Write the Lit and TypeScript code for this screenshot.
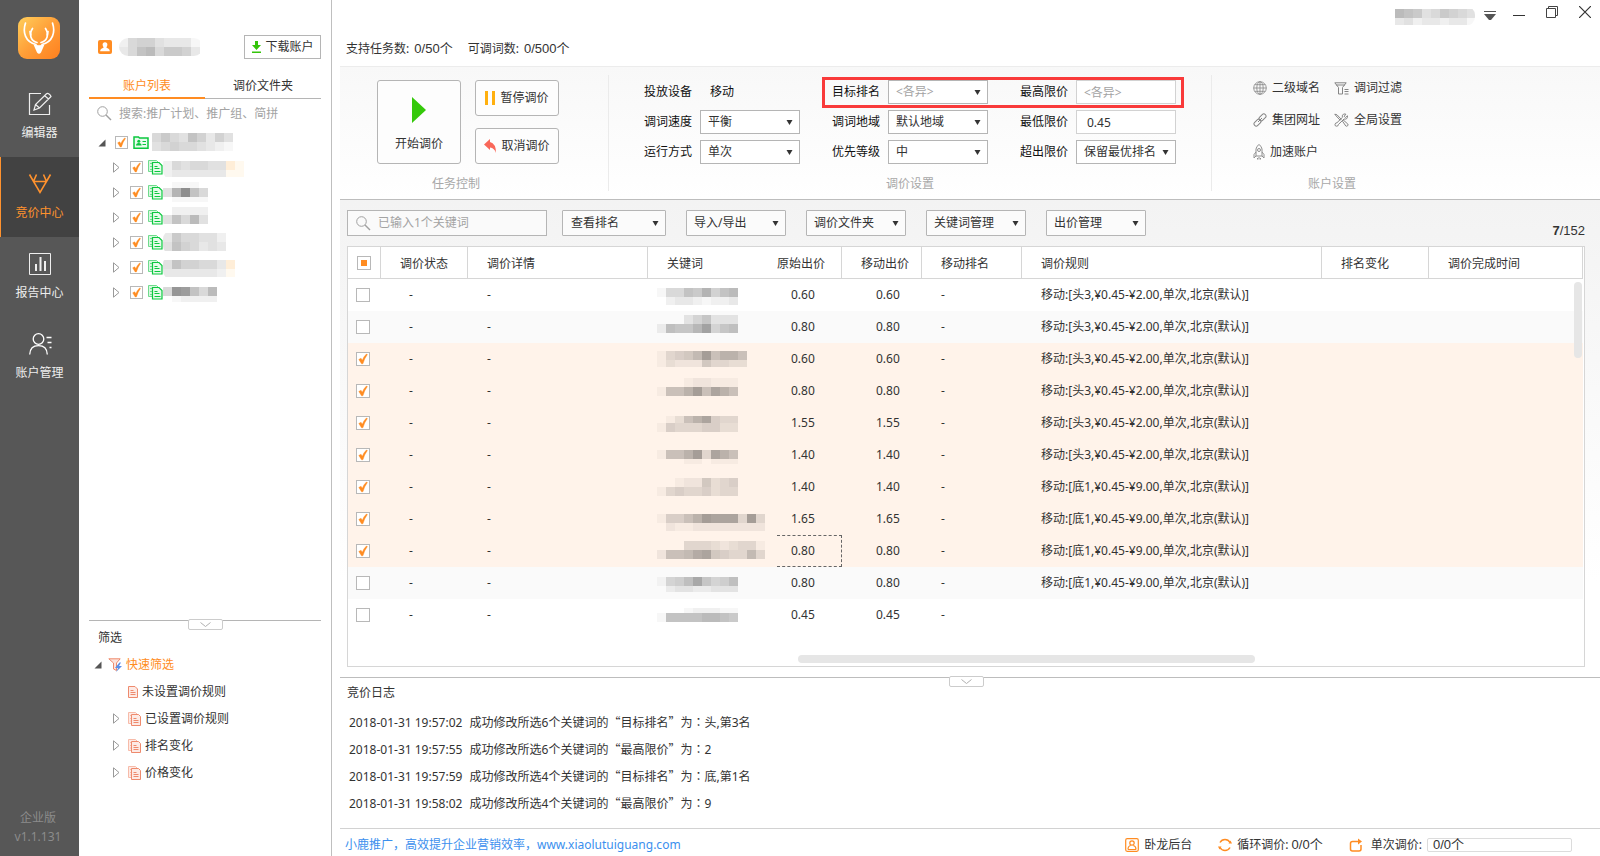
import { LitElement, html, svg, css, nothing } from "lit";
import { customElement } from "lit/decorators.js";

type Strip = [x: number, y: number, h: number, levels: string];

interface KeywordRow {
  checked: boolean;
  price: string;
  rule: string;
  mask: Strip[];
  focus?: boolean;
}

const TOP3 = "移动:[头3,¥0.45-¥2.00,单次,北京(默认)]";
const LOW1 = "移动:[底1,¥0.45-¥9.00,单次,北京(默认)]";

const ROWS: KeywordRow[] = [
  { checked: false, price: "0.60", rule: TOP3, mask: [[0, 9, 9, "15587a689"], [0, 18, 8, "023321223"]] },
  { checked: false, price: "0.80", rule: TOP3, mask: [[27, 4, 9, "357333"], [0, 13, 9, "28779c578"]] },
  { checked: true, price: "0.60", rule: TOP3, mask: [[0, 8, 9, "14568c7997"], [0, 17, 7, "1322264433"]] },
  { checked: true, price: "0.80", rule: TOP3, mask: [[27, 3, 9, "122111"], [0, 12, 9, "1779c7b97"]] },
  { checked: true, price: "1.55", rule: TOP3, mask: [[9, 9, 7, "1379b544"], [0, 16, 9, "154445533"]] },
  { checked: true, price: "1.40", rule: TOP3, mask: [[0, 11, 9, "1779c4b97"], [27, 20, 5, "110111"]] },
  { checked: true, price: "1.40", rule: LOW1, mask: [[18, 7, 9, "1226345"], [0, 16, 9, "145445344"]] },
  { checked: true, price: "1.65", rule: LOW1, mask: [[0, 11, 9, "15579cbbb4c4"], [9, 20, 8, "21122222222"]] },
  { checked: true, price: "0.80", rule: LOW1, mask: [[27, 6, 9, "444323441"], [0, 15, 9, "2778ab654484"]], focus: true },
  { checked: false, price: "0.80", rule: LOW1, mask: [[0, 10, 9, "1568b7568"], [9, 19, 6, "23322333"]] },
  { checked: false, price: "0.45", rule: "", mask: [[27, 9, 5, "122211"], [0, 14, 9, "188889987"]] },
];

const TREE: Strip[][] = [
  [[0, 6, 9, "2545544qp"], [0, 15, 7, "2333333pp"]],
  [[0, 2, 6, "01110"], [0, 8, 9, "4af85"], [9, 17, 5, "1111"]],
  [[9, 2, 8, "2222"], [0, 10, 9, "48594"]],
  [[0, 3, 9, "3755442"], [0, 12, 9, "4865343"]],
  [[0, 5, 9, "4866553q"], [0, 14, 8, "3333332p"]],
  [[0, 7, 9, "5ed859"], [9, 16, 6, "12222"]],
];

const LOG = [
  { time: "2018-01-31 19:57:02", count: 6, field: "目标排名", value: "头,第3名" },
  { time: "2018-01-31 19:57:55", count: 6, field: "最高限价", value: "2" },
  { time: "2018-01-31 19:57:59", count: 4, field: "目标排名", value: "底,第1名" },
  { time: "2018-01-31 19:58:02", count: 4, field: "最高限价", value: "9" },
];

/** Pixelated cover drawn over a private name: hex digits are grey levels, p and q are cream tints. */
const mosaic = (strips: Strip[], w: number, h: number) => html`
  <svg class="mosaic" width=${w} height=${h} viewBox="0 0 ${w} ${h}" shape-rendering="crispEdges" aria-hidden="true">
    ${strips.map(([x, y, sh, levels]) =>
      [...levels].map((c, i) => {
        const cream = c === "p" ? "#fff9ef" : c === "q" ? "#ffeed8" : "";
        return svg`<rect x=${x + i * 9} y=${y} width="9" height=${sh} fill=${cream || "#000"}
          fill-opacity=${cream ? 1 : parseInt(c, 16) / 34} />`;
      }))}
  </svg>`;

const caret = html`<svg class="caret" width="7" height="5" viewBox="0 0 7 5" aria-hidden="true"><path d="M.5 0h6L3.500 5z" fill="#333"/></svg>`;
const lens = html`<svg width="15" height="15" viewBox="0 0 15 15" fill="none" stroke="#a0a0a0" aria-hidden="true"><circle cx="5.500" cy="5.500" r="4.800"/><path d="M9 9l5 5" stroke-width="1.400"/></svg>`;
const openTri = html`<svg class="tri" width="8" height="8" viewBox="0 0 8 8" aria-hidden="true"><path d="M7.500.5v7h-7z" fill="#555"/></svg>`;
const closedTri = html`<svg class="tri" width="7" height="11" viewBox="0 0 7 11" aria-hidden="true"><path d="M.5.800v9.400l5.500-4.700z" fill="#fff" stroke="#999"/></svg>`;
const chevron = html`<svg width="11" height="5" viewBox="0 0 11 5" fill="none" stroke="#b0b0b0" aria-hidden="true"><path d="M.5.5l5 4 5-4"/></svg>`;
const greenPages = html`<svg width="15" height="15" viewBox="0 0 15 15" fill="none" aria-hidden="true">
  <path d="M.5.5h8l2 2v9h-10z" fill="#d9f7e0" stroke="#6fdb8d"/><path d="M2 3.500h2M2 6.500h2M2 9.500h2" stroke="#6fdb8d"/>
  <path d="M4.500 2.500h6.500l3 3v8.500h-9.500z" fill="#e6fbea" stroke="#0bc83f" stroke-width="1.200"/><path d="M6.500 6.500h3M6.500 8.500h5M6.500 11.500h6" stroke="#0bc83f"/></svg>`;
const redPages = html`<svg width="14" height="14" viewBox="0 0 14 14" fill="none" aria-hidden="true">
  <path d="M.5.5h7l2 2v9h-9z" fill="#fdeae5" stroke="#f7bba9"/><path d="M2 3.500h2M2 6.500h2M2 9h2" stroke="#f7bba9"/>
  <path d="M3.500 2.500h7l2 2v9h-9z" fill="#fdeae5" stroke="#ee8a6d"/><path d="M5.500 6.500h3M5.500 8.500h5M5.500 10.500h5" stroke="#ee8a6d"/></svg>`;
const redPage = html`<svg width="10" height="12" viewBox="0 0 10 12" fill="none" aria-hidden="true">
  <path d="M.5.5h6.500l2.500 2.500v8.500h-9z" fill="#fdeae5" stroke="#ee8a6d"/><path d="M2.500 4.500h3M2.500 6.500h5M2.500 8.500h5" stroke="#ee8a6d"/></svg>`;

@customElement("app-root")
export class AppRoot extends LitElement {
  static styles = css`
    :host {
      display: flex;
      height: 100vh;
      min-height: 720px;
      overflow: hidden;
      background: #fff;
      color: #333;
      font: 12px/16px "Noto Sans", "Noto Sans CJK SC", sans-serif;
    }
    * { box-sizing: border-box; }
    svg { display: block; flex: none; }
    button, select, input { font: inherit; color: inherit; margin: 0; }
    button { background: none; border: 0; padding: 0; cursor: pointer; white-space: nowrap; }
    a { color: inherit; text-decoration: none; }
    ul { list-style: none; margin: 0; padding: 0; }

    .rail { width: 79px; flex: none; display: flex; flex-direction: column; background: #575757; color: #eee; padding-bottom: 10px; }
    .logo { margin: 17px 0 18px 18px; }
    .rail-item { height: 80px; display: flex; flex-direction: column; align-items: center; gap: 9px; padding-top: 15px; width: 100%; }
    .rail-item.on { background: #424242; color: #ff922e; box-shadow: inset 1px 0 #ff922e; }
    .edition { margin-top: auto; text-align: center; color: #8c8c8c; line-height: 19px; padding-right: 3px; }

    .side { width: 253px; flex: none; display: flex; flex-direction: column; border-right: 1px solid #bfbfbf; padding: 35px 10px 0; }
    .user { display: flex; align-items: center; padding-left: 9px; gap: 7px; height: 24px; }
    .user .mosaic { border-radius: 9px; }
    .download { margin-left: auto; width: 77px; height: 24px; border: 1px solid #b5b5b5; display: flex; align-items: center; justify-content: center; gap: 3px; }
    .tabs { display: grid; grid-template-columns: 1fr 1fr; margin-top: 14px; }
    .tabs button { height: 26px; border-bottom: 1px solid #b5b5b5; padding-top: 1px; }
    .tabs .on { color: #ff8c22; border-bottom: 2px solid #ff8c22; padding-top: 2px; }
    .find { display: flex; align-items: center; gap: 7px; padding-left: 8px; height: 29px; }
    .find input, .kw-find input { border: 0; outline: 0; background: none; padding: 0; flex: 1; min-width: 0; }
    input::placeholder { color: #a3a3a3; opacity: 1; }
    .tree { padding: 2px 0 0 9px; }
    .node { display: flex; align-items: center; height: 25px; }
    .node.child { padding-left: 15px; }
    .node .tri { margin-right: 9px; }
    .node.child .tri { margin-right: 10px; }
    .node .check { margin-right: 5px; }
    .node .mosaic { border-radius: 9px 0 0 9px; }
    .check { appearance: none; width: 14px; height: 14px; flex: none; border: 1px solid #b8b8b8; background: #fff; }
    .check.small { width: 13px; height: 13px; }
    .check:checked { background: #fff url("data:image/svg+xml,%3Csvg xmlns='http://www.w3.org/2000/svg' viewBox='0 0 12 12'%3E%3Cpath d='M1.800 6.400 4 5.200 5.300 7.200Q6.500 3.800 9.400 1L10.400 1.500Q7.400 5.500 5.900 10.800H4.500z' fill='%23ff8c22' stroke='%23ff8c22' stroke-width='.4'/%3E%3C/svg%3E") center / 100% 100% no-repeat; }
    .check:indeterminate { background: linear-gradient(#ff8c22, #ff8c22) center / 6px 6px no-repeat #fff; }
    .filters { margin-top: auto; border-top: 1px solid #b5b5b5; height: 236px; display: flex; flex-direction: column; }
    .handle { align-self: center; height: 11px; width: 35px; flex: none; margin-top: -2px; border: 1px solid #ccc; border-radius: 2px; background: #fff; display: flex; align-items: center; justify-content: center; }
    .filter-title { padding-left: 9px; height: 21px; line-height: 16px; }
    .filters li { display: flex; align-items: center; height: 27px; gap: 3px; padding-left: 24px; }
    .filters li.root { padding-left: 5px; color: #ff8c22; }
    .filters li.leaf { padding-left: 39px; gap: 4px; }
    .filters li.root .tri { margin-right: 3px; }
    .filters li .tri { margin-right: 5px; }

    .main { flex: 1; min-width: 0; display: flex; flex-direction: column; padding-left: 8px; }
    .titlebar { height: 66px; display: flex; justify-content: space-between; padding: 6px 9px 0 6px; }
    .quota { display: flex; gap: 15px; padding-top: 35px; height: 52px; }
    .quota .num, .total, .footer .num { font-family: "Liberation Sans", "Noto Sans CJK SC", sans-serif; font-size: 13px; }
    .quota .num { margin-left: 2px; }
    .win { display: flex; align-items: flex-start; }
    .win .mosaic { margin-right: 9px; border-radius: 9px; }
    .win button { margin-right: 17px; }
    .win button + button { margin-right: 21px; }
    .win button:last-child { margin-right: 0; }

    .ribbon { height: 134px; flex: none; display: flex; border-top: 1px solid #ececec; border-bottom: 1px solid #bdbdbd; background: linear-gradient(#f8f8f8, #fff); padding: 8px 0; }
    .group { display: flex; flex-direction: column; border-right: 1px solid #ebebeb; }
    .group:last-child { border: 0; }
    .group-name { color: #a8a8a8; text-align: center; margin-top: auto; line-height: 14px; }
    .tasks { width: 269px; padding: 5px 49px 0 37px; }
    .task-grid { display: grid; grid-template-columns: 84px 84px; grid-template-rows: 36px 36px; gap: 12px 14px; }
    .tasks .group-name { padding-right: 24px; width: 182px; }
    .task { border: 1px solid #b5b5b5; border-radius: 3px; background: #fdfdfd; display: flex; align-items: center; justify-content: center; gap: 5px; }
    .task.big { grid-row: span 2; flex-direction: column; gap: 13px; padding-top: 4px; }
    .settings { width: 603px; padding: 5px 0 0 35px; color: #111; }
    .set-grid { position: relative; display: grid; grid-template-columns: repeat(3, 156px); grid-auto-rows: 24px; gap: 6px 32px; }
    .field { display: grid; grid-template-columns: 56px 100px; align-items: center; }
    .field .text { padding-left: 10px; }
    .field input { height: 24px; width: 100%; border: 1px solid #d2d2d2; background: #fff; padding: 0 7px; color: #333; border-radius: 0; }
    .field .value { padding: 0 10px; }
    .pick { display: grid; align-items: center; }
    .pick select { grid-area: 1 / 1; appearance: none; height: 24px; width: 100%; border: 1px solid #b5b5b5; border-radius: 0; background: #fff; padding: 0 7px; color: #333; }
    .pick .mixed { color: #a3a3a3; }
    .pick .caret { grid-area: 1 / 1; justify-self: end; margin-right: 7px; pointer-events: none; }
    .callout { position: absolute; left: 178px; top: -3px; width: 362px; height: 31px; border: 3px solid #f93a3a; pointer-events: none; }
    .settings .group-name { width: 532px; }
    .account { padding: 5px 0 0 41px; }
    .links { display: grid; grid-template-columns: 81px 81px; grid-auto-rows: 16px; gap: 16px 0; }
    .links a { display: flex; align-items: center; gap: 5px; white-space: nowrap; }
    .account .group-name { width: 158px; }

    .work { flex: 1; min-height: 0; display: flex; flex-direction: column; background: linear-gradient(#f3f3f3, #fff 80%); padding: 10px 15px 10px 7px; }
    .tools { display: flex; gap: 20px; }
    .kw-find { width: 200px; height: 26px; border: 1px solid #b5b5b5; background: #fafafa; display: flex; align-items: center; gap: 7px; padding: 0 8px; margin-right: -5px; }
    .menu { width: 100px; height: 26px; border: 1px solid #b5b5b5; border-radius: 1px; background: #fbfbfb; display: flex; align-items: center; justify-content: space-between; padding: 0 6px 0 7px; }
    .menu.wide { width: 104px; padding-left: 8px; }
    .total { margin-left: auto; align-self: flex-end; line-height: 16px; margin-bottom: -3px; }
    .sheet { position: relative; flex: 1; min-height: 0; margin-top: 10px; border: 1px solid #d6d6d6; background: #fff; padding-right: 1px; overflow: hidden; }
    table { width: 100%; border-collapse: separate; border-spacing: 0; table-layout: fixed; }
    th { height: 32px; font-weight: normal; text-align: left; border-right: 1px solid #d6d6d6; border-bottom: 1px solid #d6d6d6; padding: 2px 0 0 19px; white-space: nowrap; }
    th:first-child { padding: 0 0 0 9px; }
    th.kw { border-right: 0; }
    th.orig { padding-left: 0; }
    th .check, td .check { display: block; }
    td { height: 32px; padding: 0 0 0 19px; white-space: nowrap; }
    td:first-child { padding-left: 8px; }
    td.status { padding-left: 28px; }
    td.kw { padding-left: 9px; }
    td.orig { padding-left: 14px; }
    td.mob { padding-left: 34px; }
    tr:nth-child(even) td { background: #fafafa; }
    tr.sel td { background: #fff3ea; }
    td.focus { border: 1px dashed #666; border-left: 0; }
    .c-check { width: 33px; } .c-status { width: 87px; } .c-detail { width: 180px; } .c-kw { width: 129px; }
    .c-orig { width: 65px; } .c-mob { width: 80px; } .c-rank { width: 100px; } .c-rule { width: 300px; } .c-change { width: 107px; }
    .vbar { position: absolute; right: 2px; top: 35px; width: 8px; height: 76px; border-radius: 4px; background: #e6e6e6; }
    .hbar { position: absolute; left: 36.4%; width: 37%; bottom: 3px; height: 8px; border-radius: 4px; background: #e6e6e6; }

    .log { height: 151px; flex: none; border-top: 1px solid #bdbdbd; display: flex; flex-direction: column; }
    .log .handle { margin-right: 8px; }
    .log-title { padding-left: 7px; margin-top: -2px; line-height: 16px; }
    .log ul { padding: 8px 0 0 9px; }
    .log li { height: 27px; line-height: 27px; white-space: nowrap; }
    .log time { margin-right: 4px; }
    .cjk { font-family: "Noto Sans CJK SC", sans-serif; line-height: 16px; }
    .mid { font-family: "Noto Sans CJK TC", sans-serif; line-height: 16px; }
    .footer { height: 28px; flex: none; border-top: 1px solid #d2d2d2; display: flex; align-items: center; padding: 4px 28px 0 5px; white-space: nowrap; }
    .footer .site { color: #3b8fee; margin-right: auto; }
    .stat { display: flex; align-items: center; gap: 5px; margin-left: 26px; }
    .bar { width: 145px; height: 14px; line-height: 14px; border: 1px solid #dcdcdc; border-radius: 2px; padding-left: 5px; display: flex; align-items: center; }
  `;

  private pick(label: string, value: string, mixed = false) {
    return html`<label class="field"><span>${label}</span><span class="pick">
      <select class=${mixed ? "mixed" : ""}><option>${value}</option></select>${caret}</span></label>`;
  }

  private rail() {
    return html`<nav class="rail">
      <svg class="logo" width="42" height="42" viewBox="0 0 42 42" aria-hidden="true">
        <defs><linearGradient id="lg" x1="0" y1="0" x2="1" y2="1"><stop offset="0" stop-color="#ffcf5c"/><stop offset=".5" stop-color="#ff9f38"/><stop offset="1" stop-color="#ff7f1e"/></linearGradient></defs>
        <rect width="42" height="42" rx="9" fill="url(#lg)"/>
        <g fill="none" stroke="#fff" stroke-width="1.700" stroke-linecap="round">
          <path d="M7.500 6C4.500 15 7 25 18 27.500M34.500 6C37.500 15 35 25 24 27.500"/>
          <path d="M14.500 11.500c-4 6 -1.500 12.500 4.500 14M27.500 11.500c4 6 1.500 12.500-4.500 14"/><path d="M12 14.500l.8 3.500M30 14.500l-.8 3.500"/></g>
        <path d="M15.500 27.500q5.500 1.500 11 0l-3.500 8q-2 2.500-4 0z" fill="#fff"/>
      </svg>
      <button class="rail-item"><svg width="24" height="24" viewBox="0 0 24 24" fill="none" stroke="#eee" stroke-width="1.200" aria-hidden="true"><path d="M13 1.500H1.500v21h20V13"/><path d="M6 18l1.500-5.500L18.500 1.800q1-.8 2.500.2t2 2.500L11.500 16z M7.500 12.500l4 3.500M17 4l3.500 3"/></svg><span>编辑器</span></button>
      <button class="rail-item on"><svg width="24" height="24" viewBox="0 0 24 24" fill="none" stroke="#ff922e" stroke-width="1.600" aria-hidden="true"><path d="M1.500 2.500l4 7h13l4-7M8.500 2.500l-3 7 6.500 11 6.500-11-3-7"/></svg><span>竞价中心</span></button>
      <button class="rail-item"><svg width="24" height="24" viewBox="0 0 24 24" fill="none" stroke="#eee" aria-hidden="true"><path d="M1.500 1.500h21v21h-21z"/><path d="M8 12v7M12.500 5v14M17 9v10" stroke-width="2"/></svg><span>报告中心</span></button>
      <button class="rail-item"><svg width="24" height="24" viewBox="0 0 24 24" fill="none" stroke="#fff" stroke-width="1.300" aria-hidden="true"><circle cx="10.500" cy="7" r="5.300"/><path d="M1.700 22.500C2 16 6 13.700 10.500 13.700S19 16 19.300 22.500M18.500 5.500h5M19.500 10.500h4M21.500 15.500h2"/></svg><span>账户管理</span></button>
      <div class="edition">企业版<br />v1.1.131</div>
    </nav>`;
  }

  private side() {
    return html`<aside class="side">
      <div class="user">
        <svg width="14" height="14" viewBox="0 0 14 14" aria-hidden="true"><rect width="14" height="14" rx="2" fill="#ff8c22"/><path d="M7 2.200c1.800 0 2.700 1.300 2.300 3.100-.2 1-.6 1.500-.9 2 .3 1.200 3.400 1 3.400 4H2.200c0-3 3.100-2.800 3.400-4-.3-.5-.7-1-.9-2C4.300 3.500 5.200 2.200 7 2.200z" fill="#fff"/></svg>
        ${mosaic([[0, 0, 9, "256643331"], [0, 9, 9, "358957763"]], 84, 18)}
        <button class="download"><svg width="11" height="12" viewBox="0 0 11 12" aria-hidden="true"><path d="M4 0h3v4h3L5.500 9 1 4h3zM1 10.500h9V12H1z" fill="#34c40a"/></svg>下载账户</button>
      </div>
      <div class="tabs"><button class="on">账户列表</button><button>调价文件夹</button></div>
      <label class="find">${lens}<input aria-label="搜索" placeholder="搜索:推广计划、推广组、简拼" /></label>
      <div class="tree">
        <div class="node">${openTri}<input type="checkbox" class="check small" aria-label="账户" checked />
          <svg width="16" height="13" viewBox="0 0 16 13" fill="none" stroke="#0bc83f" aria-hidden="true"><path d="M1 1h4.500l1 1H15v10.300H1z" fill="#e9fbee" stroke-width="1.500"/><path d="M9.500 5.500h3.500M9.500 8.500h3.500"/><circle cx="5.800" cy="5.300" r="1.500" fill="#0bc83f" stroke="none"/><path d="M3 9.500q0-2.500 2.800-2.500t2.800 2.500z" fill="#0bc83f" stroke="none"/></svg>
          ${mosaic([[3, 2, 9, "575486364"], [3, 11, 9, "456554321"]], 84, 24)}</div>
        ${TREE.map((m) => html`<div class="node child">${closedTri}<input type="checkbox" class="check small" aria-label="推广计划" checked />${greenPages}${mosaic(m, 84, 25)}</div>`)}
      </div>
      <div class="filters">
        <button class="handle" aria-label="收起">${chevron}</button>
        <div class="filter-title">筛选</div>
        <ul>
          <li class="root">${openTri}<svg width="15" height="14" viewBox="0 0 15 14" fill="none" aria-hidden="true"><path d="M.8.800h11.400L8.500 5v7.500l-3-1.500V5z" fill="#fde3dc" stroke="#ee8a6d"/><path d="M11.500 4.500L7 10h3l-2 4 6-6h-3l2-3.500z" fill="#5b8fe8"/></svg>快速筛选</li>
          <li class="leaf">${redPage}未设置调价规则</li>
          ${["已设置调价规则", "排名变化", "价格变化"].map((t) => html`<li>${closedTri}${redPages}${t}</li>`)}
        </ul>
      </div>
    </aside>`;
  }

  private ribbon() {
    return html`<div class="ribbon">
      <section class="group tasks">
        <div class="task-grid">
          <button class="task big"><svg width="14" height="26" viewBox="0 0 14 26" aria-hidden="true"><path d="M0 0l14 13L0 26z" fill="#34c90a"/></svg>开始调价</button>
          <button class="task"><svg width="10" height="14" viewBox="0 0 10 14" aria-hidden="true"><path d="M0 0h3v14H0zM7 0h3v14H7z" fill="#ffb00f"/></svg>暂停调价</button>
          <button class="task"><svg width="12" height="14" viewBox="0 0 12 14" aria-hidden="true"><path d="M0 5.500L6 0v3q6 1.500 6 11-1.500-5-6-5.500v2.500z" fill="#f9685a"/></svg>取消调价</button>
        </div>
        <div class="group-name">任务控制</div>
      </section>
      <section class="group settings">
        <div class="set-grid">
          <div class="field"><span>投放设备</span><span class="text">移动</span></div>
          ${this.pick("目标排名", "<各异>", true)}
          <label class="field"><span>最高限价</span><input placeholder="<各异>" /></label>
          ${this.pick("调词速度", "平衡")}
          ${this.pick("调词地域", "默认地域")}
          <label class="field"><span>最低限价</span><input class="value" .value=${"0.45"} /></label>
          ${this.pick("运行方式", "单次")}
          ${this.pick("优先等级", "中")}
          ${this.pick("超出限价", "保留最优排名")}
          <div class="callout"></div>
        </div>
        <div class="group-name">调价设置</div>
      </section>
      <section class="group account">
        <div class="links">
          <a href="#"><svg width="14" height="14" viewBox="0 0 14 14" fill="none" stroke="#909090" stroke-width=".9" aria-hidden="true"><circle cx="7" cy="7" r="6.300"/><ellipse cx="7" cy="7" rx="3.200" ry="6.300"/><path d="M7 .7v12.600M.7 7h12.600M1.700 3.700h10.600M1.700 10.300h10.600"/></svg>二级域名</a>
          <a href="#"><svg width="15" height="13" viewBox="0 0 15 13" fill="none" stroke="#858585" aria-hidden="true"><path d="M.8.800h11.400L8.500 5.500v6.500h-4V5.500zM2 3h9M10.500 7.500h4M10.500 9.500h4M10.500 12h4"/></svg>调词过滤</a>
          <a href="#"><svg width="14" height="14" viewBox="0 0 14 14" fill="none" stroke="#858585" aria-hidden="true"><rect x="5.500" y="2.200" width="8" height="4.400" rx="2.200" transform="rotate(-45 9.500 4.400)"/><rect x=".5" y="7.400" width="8" height="4.400" rx="2.200" transform="rotate(-45 4.500 9.600)"/><path d="M5 9l4-4"/></svg>集团网址</a>
          <a href="#"><svg width="15" height="14" viewBox="0 0 15 14" fill="none" stroke="#858585" stroke-linejoin="round" aria-hidden="true"><path d="M.8 1.200l2.200.6 4.200 4.400-1 1L2 2.800zM8.500 8.200l1-1L13.800 11q.7 1-.2 1.800t-1.800.2z"/><path d="M13.500 2.800l-2 1.700-1.300-1.200 1.700-2.100Q9.300.2 8.500 2.200q-.4 1 .1 2L3 9.700q-1.700 0-2 1.700t1.500 1.800 1.900-1.700L10 6q3.800.8 3.500-3.200z"/></svg>全局设置</a>
          <a href="#"><svg width="12" height="16" viewBox="0 0 12 16" fill="none" stroke="#909090" aria-hidden="true"><path d="M3 12V5q.5-3 3-4.500Q8.500 2 9 5v7zM3 8L1 10.500V14l2-2M9 8l2 2.500V14l-2-2M4.500 14v1.500M6 13v2.500M7.500 14v1.500"/><circle cx="6" cy="6" r="1.500"/></svg>加速账户</a>
        </div>
        <div class="group-name">账户设置</div>
      </section>
    </div>`;
  }

  private table() {
    return html`<div class="sheet">
      <table>
        <colgroup><col class="c-check" /><col class="c-status" /><col class="c-detail" /><col class="c-kw" /><col class="c-orig" /><col class="c-mob" /><col class="c-rank" /><col class="c-rule" /><col class="c-change" /><col /></colgroup>
        <thead><tr>
          <th><input type="checkbox" class="check" aria-label="全选" .indeterminate=${true} /></th>
          <th>调价状态</th><th>调价详情</th><th class="kw">关键词</th><th class="orig">原始出价</th><th>移动出价</th><th>移动排名</th><th>调价规则</th><th>排名变化</th><th>调价完成时间</th>
        </tr></thead>
        <tbody>${ROWS.map((r) => html`<tr class=${r.checked ? "sel" : ""}>
          <td><input type="checkbox" class="check" aria-label="选择关键词" .checked=${r.checked} /></td>
          <td class="status">-</td><td>-</td>
          <td class="kw">${mosaic(r.mask, 110, 32)}</td>
          <td class="orig ${r.focus ? "focus" : ""}">${r.price}</td>
          <td class="mob">${r.price}</td><td>-</td>
          <td>${r.rule || nothing}</td><td></td><td></td>
        </tr>`)}</tbody>
      </table>
      <div class="vbar"></div><div class="hbar"></div>
    </div>`;
  }

  render() {
    return html`${this.rail()}${this.side()}
      <main class="main">
        <header class="titlebar">
          <div class="quota"><span>支持任务数: <span class="num">0/50个</span></span><span>可调词数: <span class="num">0/500个</span></span></div>
          <div class="win">
            ${mosaic([[0, 3, 9, "0987457654"], [0, 12, 7, "0342332331"]], 89, 20)}
            <button aria-label="菜单"><svg width="12" height="18" viewBox="0 0 12 18" aria-hidden="true"><path d="M0 5h12v1H0zM0 8h12l-5 6H5z" fill="#555"/></svg></button>
            <button aria-label="最小化"><svg width="12" height="12" viewBox="0 0 12 12" aria-hidden="true"><path d="M0 9.500h12" stroke="#333"/></svg></button>
            <button aria-label="还原"><svg width="12" height="12" viewBox="0 0 12 12" fill="none" stroke="#444" aria-hidden="true"><path d="M.5 2.500h9v9h-9zM2.500 2.500v-2h9v9h-2"/></svg></button>
            <button aria-label="关闭"><svg width="12" height="12" viewBox="0 0 12 12" aria-hidden="true"><path d="M0 0l12 12M12 0L0 12" stroke="#333" stroke-width="1.200"/></svg></button>
          </div>
        </header>
        ${this.ribbon()}
        <section class="work">
          <div class="tools">
            <label class="kw-find">${lens}<input aria-label="关键词" placeholder="已输入1个关键词" /></label>
            <button class="menu wide">查看排名${caret}</button>
            ${["导入/导出", "调价文件夹", "关键词管理", "出价管理"].map((t) => html`<button class="menu">${t}${caret}</button>`)}
            <div class="total"><b>7</b>/152</div>
          </div>
          ${this.table()}
        </section>
        <section class="log">
          <button class="handle" aria-label="收起日志">${chevron}</button>
          <div class="log-title">竞价日志</div>
          <ul>${LOG.map((l) => html`<li><time>${l.time}</time> 成功修改所选${l.count}个关键词的<span class="cjk">“</span>${l.field}<span class="cjk">”</span>为<span class="mid">：</span>${l.value}</li>`)}</ul>
        </section>
        <footer class="footer">
          <a class="site" href="#">小鹿推广，高效提升企业营销效率，www.xiaolutuiguang.com</a>
          <span class="stat"><svg width="14" height="14" viewBox="0 0 14 14" fill="none" stroke="#ff8c22" stroke-width="1.200" aria-hidden="true"><rect x=".7" y=".7" width="12.600" height="12.600" rx="1.500"/><circle cx="7" cy="5" r="2.200"/><path d="M3 11.500q0-3.500 2.800-4M11 11.500q0-3.500-2.800-4M3 11.500h8"/></svg>卧龙后台</span>
          <span class="stat"><svg width="14" height="14" viewBox="0 0 14 14" fill="none" stroke="#ff8c22" stroke-width="1.500" aria-hidden="true"><path d="M2 4.500A5.700 5.700 0 0 1 12 4.500M12 9.500A5.700 5.700 0 0 1 2 9.500"/><path d="M10.500 5.500h3.500l-1.500-3zM3.500 8.500H0l1.500 3z" fill="#ff8c22" stroke="none"/></svg><span>循环调价: <span class="num">0/0个</span></span></span>
          <span class="stat"><svg width="14" height="14" viewBox="0 0 14 14" fill="none" stroke="#ff8c22" stroke-width="1.500" aria-hidden="true"><path d="M10 3.500H3.500Q1.500 3.500 1.500 5.500V11q0 2 2 2H10q2 0 2-2V7"/><path d="M9 .5l4 3-4 3z" fill="#ff8c22" stroke="none"/></svg>&nbsp;单次调价:<span class="bar"><span class="num">0/0个</span></span></span>
        </footer>
      </main>`;
  }
}
